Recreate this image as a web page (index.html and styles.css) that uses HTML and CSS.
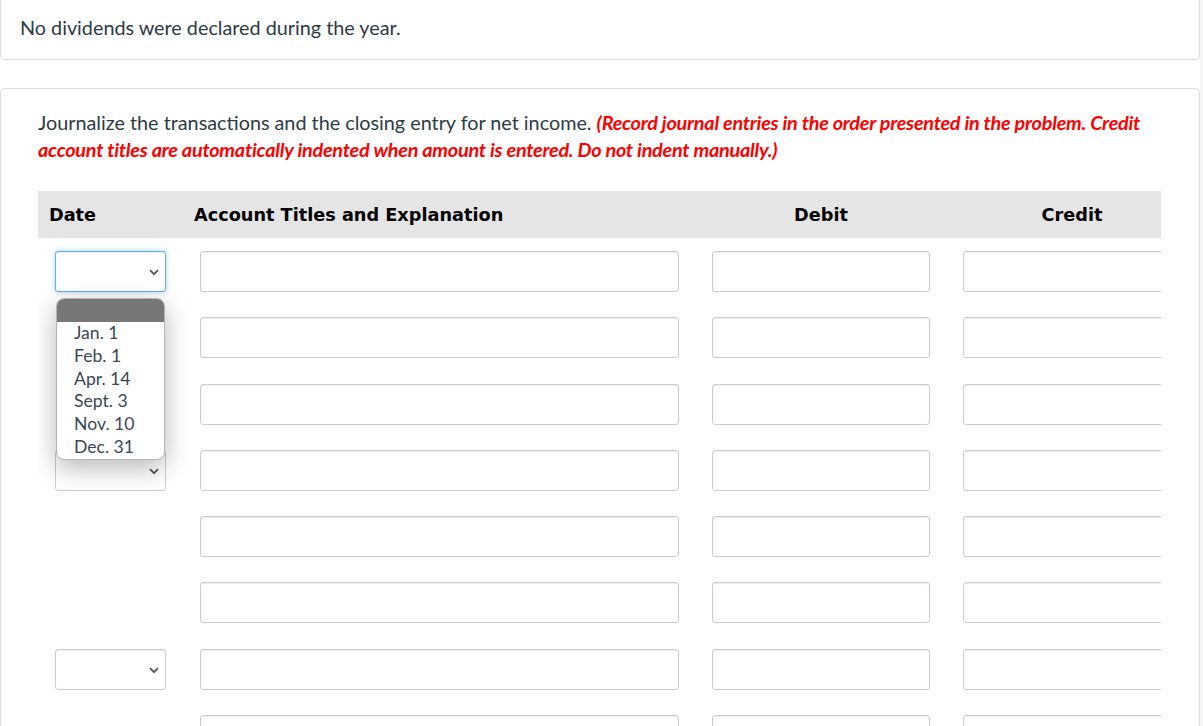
FILE: index.html
```html
<!DOCTYPE html>
<html>
<head>
<meta charset="utf-8">
<link rel="stylesheet" href="styles.css">
</head>
<body>
<div class="page">
  <div class="card card-top">
    <p class="text">No dividends were declared during the year.</p>
  </div>
  <div class="card card-main">
    <p class="text instr">Journalize the transactions and the closing entry for net income. <em class="warn">(Record journal entries in the order presented in the problem. Credit account titles are automatically indented when amount is entered. Do not indent manually.)</em></p>
    <div class="journal">
      <div class="row head">
        <div class="c-date"><span class="h-left">Date</span></div>
        <div class="c-acct"><span class="h-left">Account Titles and Explanation</span></div>
        <div class="c-amt h-center">Debit</div>
        <div class="c-amt h-center">Credit</div>
      </div>
      <div class="rows">
        <div class="row">
          <div class="c-date select-wrap">
            <div class="select focus"><svg class="chev" width="10" height="7" viewBox="0 0 10 7"><path d="M1 1.2 L5 5.2 L9 1.2" fill="none" stroke="#555" stroke-width="1.8"/></svg></div>
            <div class="menu">
              <div class="menu-sel"></div>
              <div class="opt">Jan. 1</div>
              <div class="opt">Feb. 1</div>
              <div class="opt">Apr. 14</div>
              <div class="opt">Sept. 3</div>
              <div class="opt">Nov. 10</div>
              <div class="opt">Dec. 31</div>
            </div>
          </div>
          <div class="c-acct input"></div><div class="c-amt input"></div><div class="c-amt input"></div>
        </div>
        <div class="row">
          <div class="c-date"></div>
          <div class="c-acct input"></div><div class="c-amt input"></div><div class="c-amt input"></div>
        </div>
        <div class="row">
          <div class="c-date"></div>
          <div class="c-acct input"></div><div class="c-amt input"></div><div class="c-amt input"></div>
        </div>
        <div class="row">
          <div class="c-date select"><svg class="chev" width="10" height="7" viewBox="0 0 10 7"><path d="M1 1.2 L5 5.2 L9 1.2" fill="none" stroke="#555" stroke-width="1.8"/></svg></div>
          <div class="c-acct input"></div><div class="c-amt input"></div><div class="c-amt input"></div>
        </div>
        <div class="row">
          <div class="c-date"></div>
          <div class="c-acct input"></div><div class="c-amt input"></div><div class="c-amt input"></div>
        </div>
        <div class="row">
          <div class="c-date"></div>
          <div class="c-acct input"></div><div class="c-amt input"></div><div class="c-amt input"></div>
        </div>
        <div class="row">
          <div class="c-date select"><svg class="chev" width="10" height="7" viewBox="0 0 10 7"><path d="M1 1.2 L5 5.2 L9 1.2" fill="none" stroke="#555" stroke-width="1.8"/></svg></div>
          <div class="c-acct input"></div><div class="c-amt input"></div><div class="c-amt input"></div>
        </div>
        <div class="row">
          <div class="c-date"></div>
          <div class="c-acct input"></div><div class="c-amt input"></div><div class="c-amt input"></div>
        </div>
      </div>
    </div>
  </div>
</div>
</body>
</html>
```
FILE: styles.css
```css
html, body {
  margin: 0;
  padding: 0;
  background: #fff;
  overflow: hidden;
}
body {
  font-family: Lato, "Open Sans", sans-serif;
  color: #2d3b45;
}
.page {
  width: 1200px;
  height: 726px;
  overflow: hidden;
  border-right: 3px solid #f6f6f6;
}
.card {
  box-sizing: border-box;
  width: 1200px;
  background: #fff;
  border: 1px solid #dcdcdc;
  border-radius: 5px;
}
.card-top {
  border-top: 0;
  border-radius: 0 0 5px 5px;
  padding: 14px 19px 18px;
}
.card-main {
  margin-top: 28px;
  padding: 20px 37px 40px;
  height: 800px;
}
.text {
  margin: 0;
  font-size: 19.8px;
  line-height: 27px;
}
.warn {
  color: #f00;
  font-weight: 700;
  font-style: italic;
  letter-spacing: -0.22px;
}
.journal {
  margin-top: 28px;
  width: 1123px;
  overflow: hidden;
}
.row {
  display: flex;
  align-items: stretch;
  padding-left: 17px;
  column-gap: 33px;
}
.head {
  background: #e5e5e5;
  height: 47px;
  align-items: center;
  font-family: "DejaVu Sans", Verdana, sans-serif;
  font-weight: 700;
  font-size: 17.7px;
  color: #000;
}
.h-left {
  margin-left: -6px;
}
.h-center {
  text-align: center;
}
.c-date {
  flex: 0 0 111px;
  margin-right: 1px;
}
.c-acct {
  flex: 0 0 479px;
}
.c-amt {
  flex: 0 0 218px;
}
.rows {
  display: flex;
  flex-direction: column;
  row-gap: 25.3px;
  margin-top: 13px;
}
.rows .row {
  height: 41px;
}
.input, .select {
  box-sizing: border-box;
  height: 41px;
  border: 1px solid #ccc;
  border-radius: 3px;
  background: #fff;
  box-shadow: inset 0 1px 1px rgba(0,0,0,0.075);
}
.select {
  display: flex;
  align-items: center;
  justify-content: flex-end;
  padding-right: 6px;
}
.select-wrap {
  position: relative;
}
.select.focus {
  border-color: #66afe9;
  box-shadow: inset 0 1px 1px rgba(0,0,0,0.075), 0 0 5px rgba(102,175,233,0.6);
}
.chev {
  display: block;
  margin-top: 2px;
}
.menu {
  position: absolute;
  z-index: 5;
  left: 1px;
  top: 47px;
  width: 109px;
  box-sizing: border-box;
  background: #fff;
  border: 1px solid #b4b4b4;
  border-radius: 8px;
  overflow: hidden;
  box-shadow: 0 8px 26px rgba(0,0,0,0.28);
  font-size: 17.6px;
  color: #3b4754;
}
.menu-sel {
  height: 23px;
  background: #777;
}
.opt {
  height: 22.8px;
  line-height: 22.8px;
  padding-left: 17px;
}
```
